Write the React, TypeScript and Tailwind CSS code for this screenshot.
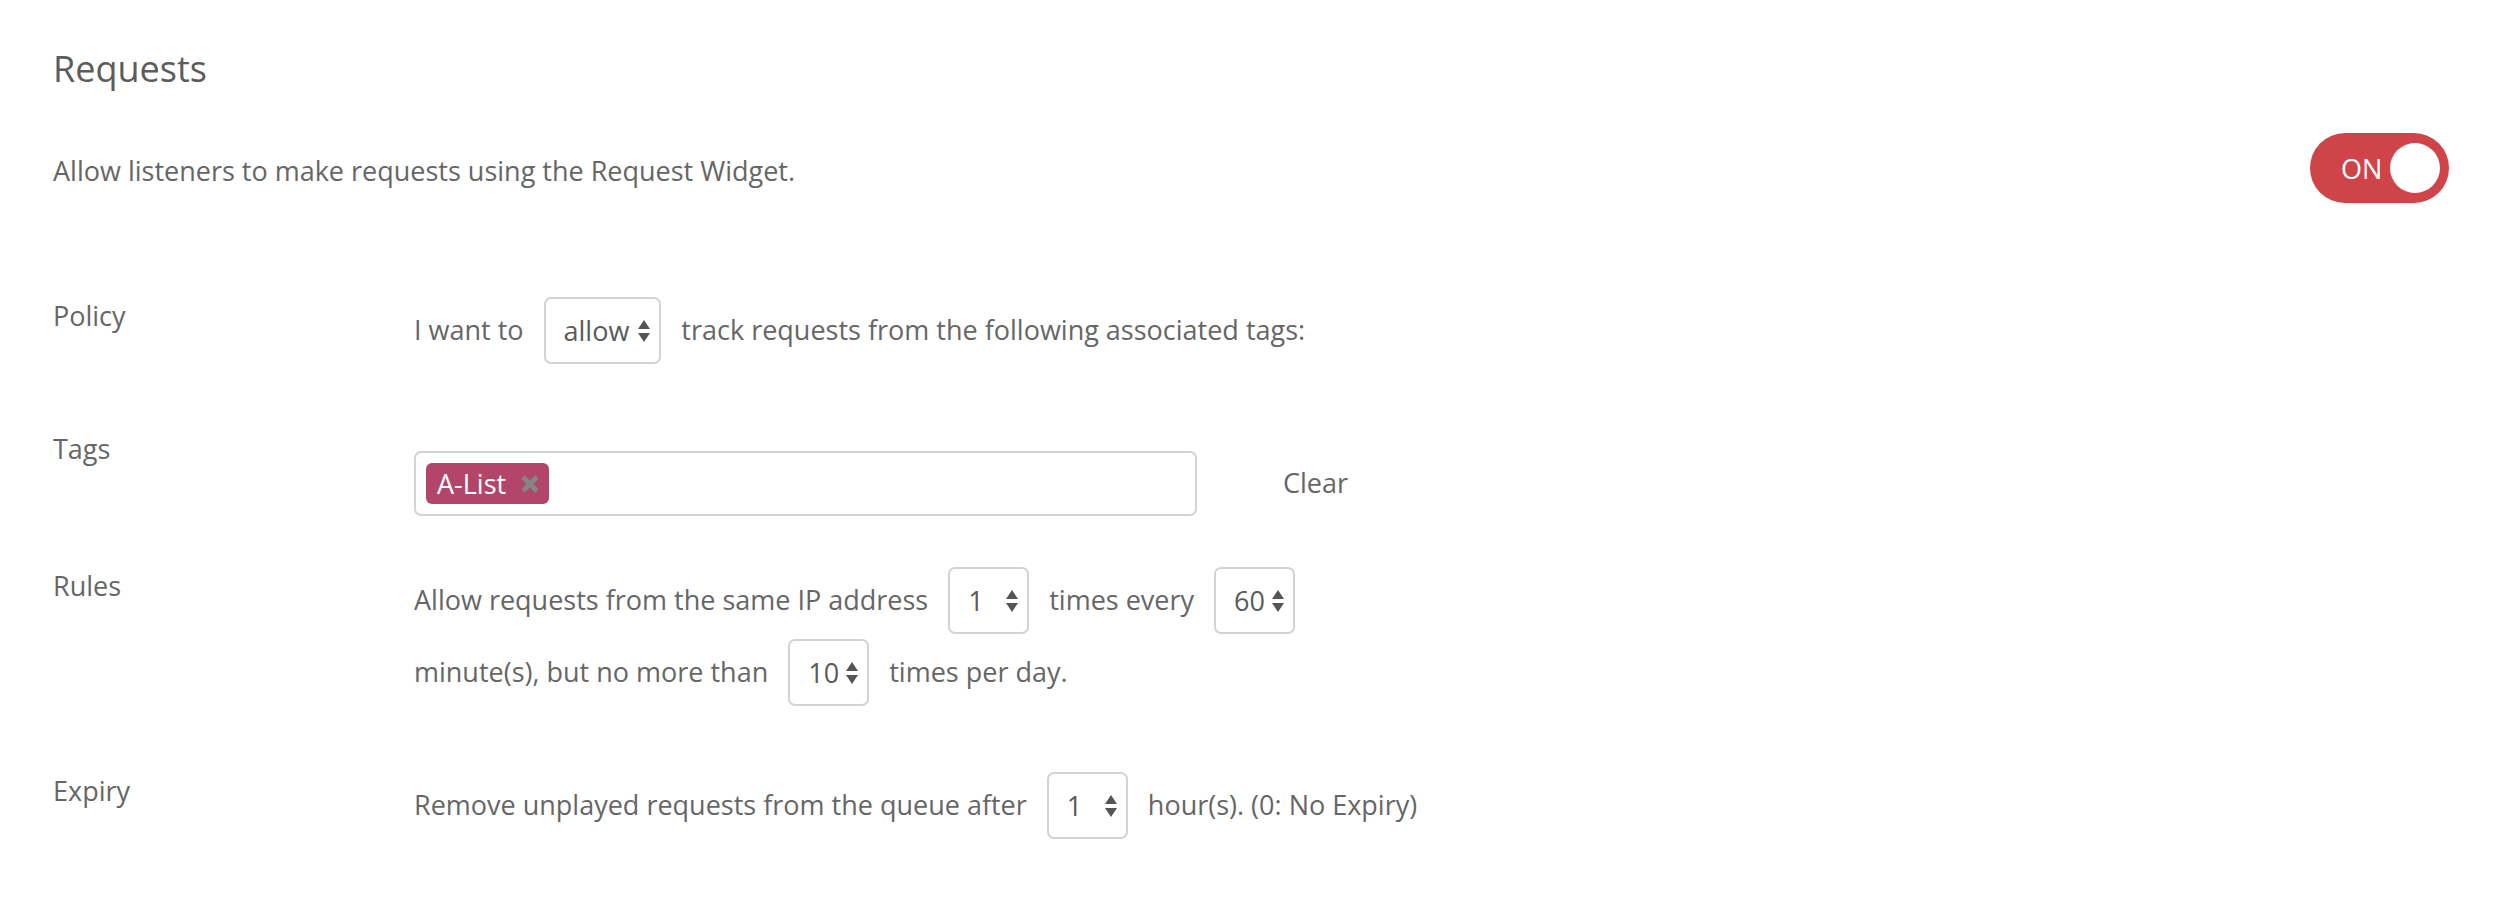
import React from 'react';

const SelectArrows: React.FC = () => (
  <svg width="12" height="22" viewBox="0 0 12 22" className="shrink-0">
    <polygon points="6,0 12,9 0,9" fill="#555" />
    <polygon points="0,13 12,13 6,22" fill="#555" />
  </svg>
);

interface FakeSelectProps {
  value: string;
  narrow?: boolean;
}

const FakeSelect: React.FC<FakeSelectProps> = ({ value, narrow }) => (
  <div
    className={`inline-flex h-[67px] shrink-0 items-center justify-between rounded-[7px] border-2 border-[#d3d3d3] bg-white pl-[18px] pr-[9px] text-[#5a5a5a] ${
      narrow ? 'w-[81px]' : 'gap-[9px]'
    }`}
  >
    <span className="leading-none">{value}</span>
    <SelectArrows />
  </div>
);

const Toggle: React.FC = () => (
  <div className="flex h-[70px] w-[139px] shrink-0 items-center justify-between rounded-full bg-[#cf4449] pl-[31px] pr-[9px]">
    <span className="text-[27px] leading-none text-white">ON</span>
    <span className="h-[50px] w-[50px] rounded-full bg-white" />
  </div>
);

const App: React.FC = () => {
  return (
    <div className="min-h-[922px] bg-white pl-[53px] pr-[57px] pt-[45px] font-['Open_Sans',sans-serif] text-[27px] text-[#666]">
      <h1 className="text-[36px] font-normal leading-[48px] text-[#5c5c5c]">Requests</h1>

      <div className="mt-[40px] flex items-center justify-between">
        <p className="pt-[6px] leading-[40px]">Allow listeners to make requests using the Request Widget.</p>
        <Toggle />
      </div>

      {/* Policy */}
      <div className="mt-[94px] flex items-start">
        <div className="w-[361px] shrink-0 leading-[38px]">Policy</div>
        <div className="flex h-[67px] items-center gap-[20px]">
          <span>I want to</span>
          <FakeSelect value="allow" />
          <span>track requests from the following associated tags:</span>
        </div>
      </div>

      {/* Tags */}
      <div className="mt-[66px] flex items-start">
        <div className="w-[361px] shrink-0 leading-[38px]">Tags</div>
        <div className="flex items-center pt-[21px]">
          <div className="flex h-[65px] w-[783px] items-center rounded-[7px] border-2 border-[#d3d3d3] bg-white pl-[10px]">
            <span className="inline-flex h-[41px] items-center gap-[15px] rounded-[6px] bg-[#b4456a] pl-[11px] pr-[10px] text-white">
              <span className="leading-none">A-List</span>
              <svg width="18" height="18" viewBox="0 0 18 18">
                <path d="M2 2 L16 16 M16 2 L2 16" stroke="#858585" strokeWidth="5" />
              </svg>
            </span>
          </div>
          <span className="ml-[86px]">Clear</span>
        </div>
      </div>

      {/* Rules */}
      <div className="mt-[51px] flex items-start">
        <div className="w-[361px] shrink-0 leading-[38px]">Rules</div>
        <div className="flex flex-col gap-[5px]">
          <div className="flex h-[67px] items-center gap-[20px]">
            <span>Allow requests from the same IP address</span>
            <FakeSelect value="1" narrow />
            <span>times every</span>
            <FakeSelect value="60" narrow />
          </div>
          <div className="flex h-[67px] items-center gap-[20px]">
            <span>minute(s), but no more than</span>
            <FakeSelect value="10" narrow />
            <span>times per day.</span>
          </div>
        </div>
      </div>

      {/* Expiry */}
      <div className="mt-[66px] flex items-start">
        <div className="w-[361px] shrink-0 leading-[38px]">Expiry</div>
        <div className="flex h-[67px] items-center gap-[20px]">
          <span>Remove unplayed requests from the queue after</span>
          <FakeSelect value="1" narrow />
          <span>hour(s). (0: No Expiry)</span>
        </div>
      </div>
    </div>
  );
};

export default App;
